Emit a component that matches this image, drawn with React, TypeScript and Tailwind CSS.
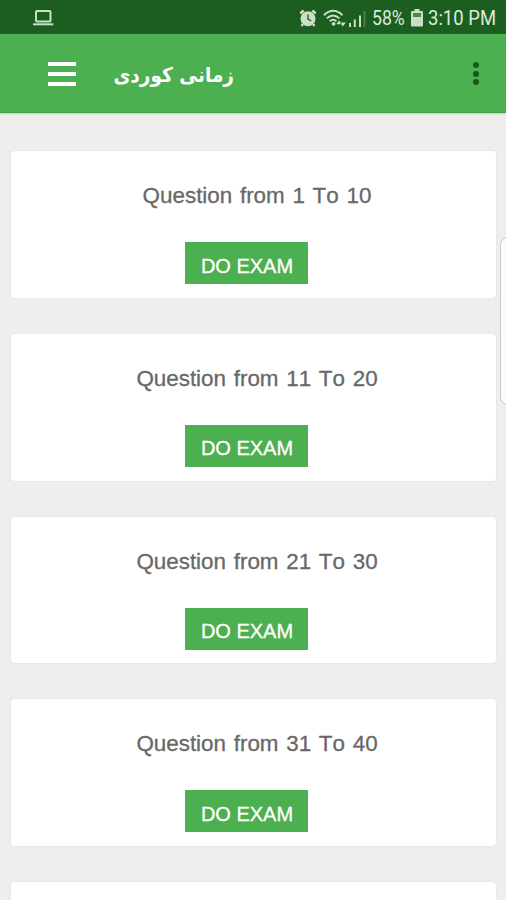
const exams = [
  "Question from 1 To 10",
  "Question from 11 To 20",
  "Question from 21 To 30",
  "Question from 31 To 40",
];

function StatusBar() {
  return (
    <div className="flex h-[34px] shrink-0 items-center border-b border-[#17571a] bg-[#1b5e20] text-[#c9dfc6]">
      <svg className="ml-8 h-5 w-6" viewBox="0 0 24 20" fill="none" stroke="currentColor">
        <rect x="4" y="4" width="14.5" height="10.5" rx="1" strokeWidth="2" />
        <path d="M1 17.3H21.3" strokeWidth="2" />
      </svg>
      <svg className="ml-[242px] h-6 w-[72px] shrink-0" viewBox="298 5 72 24" fill="none" stroke="currentColor">
        <circle cx="308" cy="18.7" r="7.5" fill="currentColor" stroke="none" />
        <path d="M300.3 13.5L303.7 10.5M315.7 13.5L312.3 10.5M303 24L301.5 26M313 24L314.5 26" strokeWidth="2.4" />
        <path d="M308 14.5V19.2L311.3 21" stroke="#1b5e20" strokeWidth="1.4" />
        <path d="M324 15.2Q333 6.5 342.5 15.2M326.8 18.4Q333 12.5 339.5 18.4M329.7 21.3Q333 18.2 336.5 21.3" strokeWidth="1.9" />
        <circle cx="333.6" cy="23.8" r="1.9" fill="currentColor" stroke="none" />
        <path d="M336.3 24.3L339.2 20.3L342 24.3ZM339.8 22.6L342.8 26.4L345.8 22.6Z" fill="currentColor" stroke="none" />
        <path d="M350 23V27M354.8 19.5V27M360 15.5V27" strokeWidth="2" />
        <path d="M364.5 11V27" strokeWidth="1.8" opacity=".3" />
      </svg>
      <span className="relative top-px ml-[2px] w-[34px] shrink-0 origin-left scale-x-[0.84] whitespace-nowrap font-['Roboto',sans-serif] text-[21px] leading-6 text-[#dcebd9]">58%</span>
      <svg className="relative top-px ml-[5px] h-[18px] w-3 shrink-0" viewBox="0 0 12 18">
        <path d="M3.5 0H8.5V2H11Q12 2 12 3V16.5Q12 17.5 11 17.5H1Q0 17.5 0 16.5V3Q0 2 1 2H3.5Z" fill="currentColor" />
        <path d="M2 4H10V8H2Z" fill="#4f8350" />
      </svg>
      <span className="relative top-px ml-[5px] w-[68px] shrink-0 origin-left scale-x-[0.88] whitespace-nowrap font-['Roboto',sans-serif] text-[21px] leading-6 text-[#dcebd9]">3:10 PM</span>
    </div>
  );
}

function Toolbar() {
  return (
    <header className="flex h-[79px] shrink-0 items-center border-b border-[#46a149] bg-[#4caf50] shadow-[0_1px_2px_#c5c9c5]">
      <button aria-label="Menu" className="ml-12 mt-px flex w-[28px] flex-col gap-[6px]">
        <span className="h-1 bg-white" />
        <span className="h-1 bg-white" />
        <span className="h-1 bg-white" />
      </button>
      <h1 dir="rtl" className="ml-[37px] mt-[3px] w-[121px] scale-y-[1.1] whitespace-nowrap font-['DejaVu_Sans',sans-serif] text-[18.5px] font-bold leading-8 text-white">زمانی کوردی</h1>
      <button aria-label="More options" className="ml-[239px] mt-px flex flex-col gap-[2.5px]">
        <span className="size-[6px] rounded-full bg-[#145a18]" />
        <span className="size-[6px] rounded-full bg-[#145a18]" />
        <span className="size-[6px] rounded-full bg-[#145a18]" />
      </button>
    </header>
  );
}

function ExamCard({ title }: { title: string }) {
  return (
    <section className="flex h-[146.8px] shrink-0 flex-col items-center rounded-[4px] bg-white pt-[31px] shadow-[0_0_2px_#dedede]">
      <h2 className="ml-[7px] h-7 whitespace-nowrap text-[22.4px] leading-7 text-[#686868] [font-kerning:none] [word-spacing:1.5px] [-webkit-text-stroke:0.3px_#686868]">{title}</h2>
      <button className="mr-[14px] mt-8 h-[42px] w-[123px] bg-[#4caf50] pl-px pt-[5px] text-[20px] leading-9 text-white [-webkit-text-stroke:0.3px_white]">
        DO EXAM
      </button>
    </section>
  );
}

export default function App() {
  return (
    <div className="relative flex h-[900px] w-[506px] flex-col overflow-hidden bg-[#eeeeee] font-['Liberation_Sans',Arial,sans-serif]">
      <StatusBar />
      <Toolbar />
      <main className="flex min-h-0 flex-1 flex-col gap-9 overflow-hidden pl-[11px] pr-[10px] pt-[38px]">
        {exams.map((title) => (
          <ExamCard key={title} title={title} />
        ))}
        <section className="min-h-0 flex-1 rounded-t-[4px] bg-white shadow-[0_0_2px_#dedede]" />
      </main>
      <div className="absolute -right-1 top-[237px] h-[168px] w-[10px] rounded-l-[8px] border border-[#c9c9c9] bg-[#fcfcfc]" />
    </div>
  );
}
